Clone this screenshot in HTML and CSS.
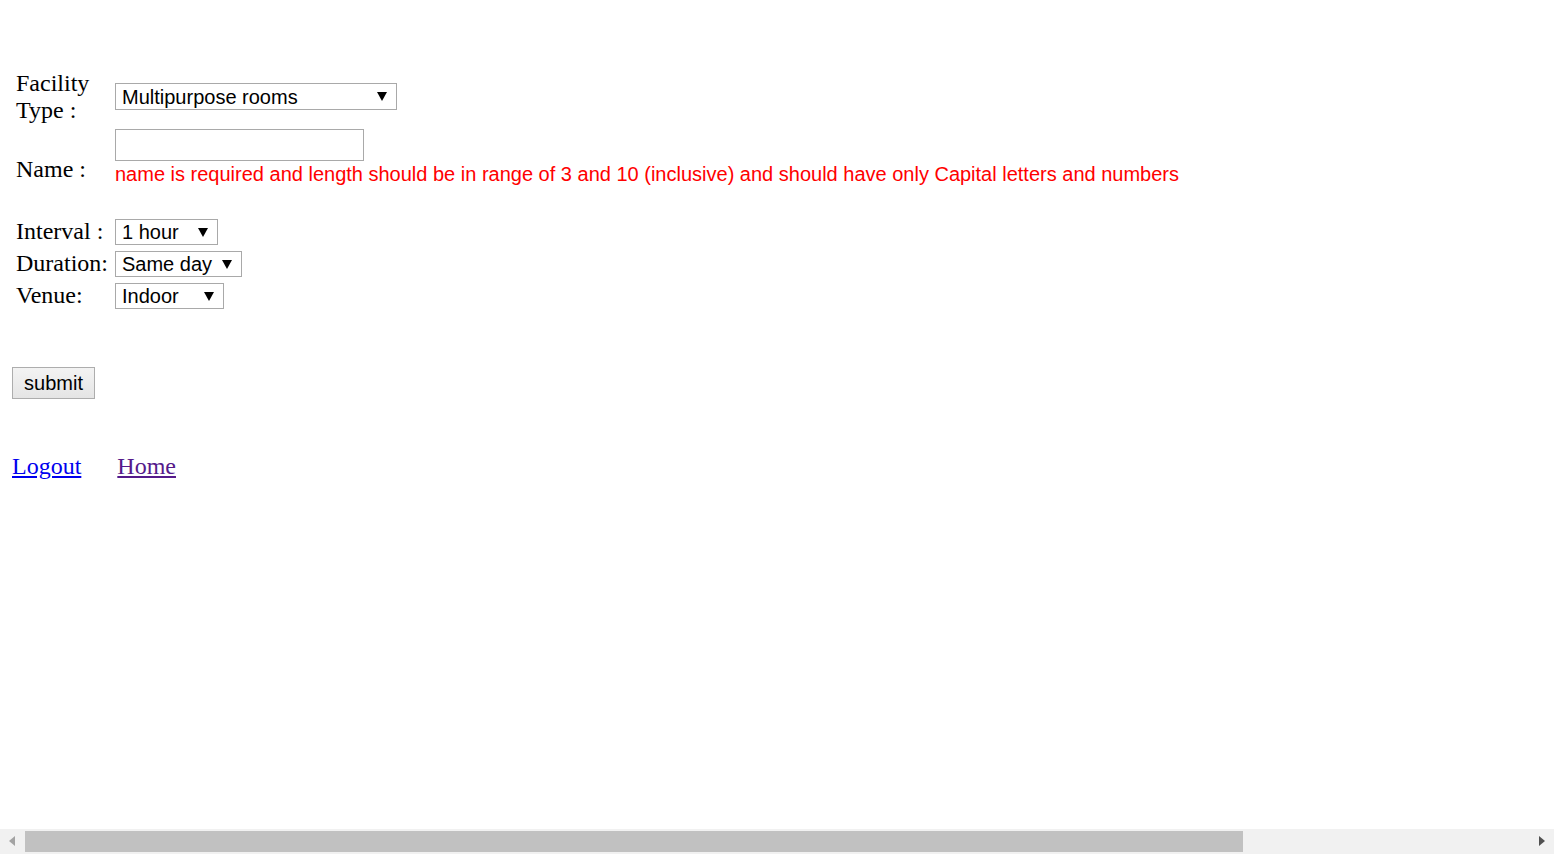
FILE: index.html
```html
<!DOCTYPE html>
<html lang="en">
<head>
<meta charset="utf-8">
<title>Facility</title>
<link rel="stylesheet" href="styles.css">
</head>
<body>
<form class="form" action="#">
  <div class="fields">
    <div class="row row-facility">
      <label class="lbl" for="ftype">Facility Type :</label>
      <span class="sel sel-facility">
        <select id="ftype">
          <option>Multipurpose rooms</option>
          <option>Conference rooms</option>
        </select>
      </span>
    </div>
    <div class="row row-name">
      <label class="lbl lbl-name" for="fname">Name :</label>
      <div class="ctl">
        <input class="txt" id="fname" type="text">
        <div class="error">name is required and length should be in range of 3 and 10 (inclusive) and should have only Capital letters and numbers</div>
      </div>
    </div>
    <div class="row">
      <label class="lbl" for="finterval">Interval :</label>
      <span class="sel sel-interval">
        <select id="finterval">
          <option>1 hour</option>
          <option>2 hours</option>
        </select>
      </span>
    </div>
    <div class="row">
      <label class="lbl" for="fduration">Duration:</label>
      <span class="sel sel-duration">
        <select id="fduration">
          <option>Same day</option>
          <option>Multiple days</option>
        </select>
      </span>
    </div>
    <div class="row">
      <label class="lbl" for="fvenue">Venue:</label>
      <span class="sel sel-venue">
        <select id="fvenue">
          <option>Indoor</option>
          <option>Outdoor</option>
        </select>
      </span>
    </div>
  </div>
  <button class="submit" type="button">submit</button>
</form>
<nav class="links">
  <a class="link" href="#">Logout</a>
  <a class="link link-visited" href="#">Home</a>
</nav>
<div class="hscroll" aria-hidden="true">
  <span class="arrow arrow-left"></span>
  <span class="thumb"></span>
  <span class="arrow arrow-right"></span>
</div>
</body>
</html>
```
FILE: styles.css
```css
html, body {
  background: #ffffff;
}
body {
  margin: 12px;
  font-family: "Liberation Serif", "Times New Roman", serif;
  font-size: 24px;
  line-height: 27px;
  color: #000000;
}
.form {
  margin: 0;
}
.fields {
  display: flex;
  flex-direction: column;
  gap: 5px;
  padding: 58px 0 0 4px;
}
.row {
  display: flex;
  align-items: center;
}
.lbl {
  width: 99px;
  flex-shrink: 0;
  line-height: 27px;
}
.lbl-name {
  margin-bottom: 4px;
}
.row-name {
  height: 84px;
}
.ctl {
  align-self: flex-start;
}
.txt {
  display: block;
  box-sizing: border-box;
  width: 249px;
  height: 32px;
  margin: 0;
  border: 1px solid #a9a9a9;
  padding: 0 4px;
  font-family: "Liberation Sans", Arial, sans-serif;
  font-size: 20px;
  background: #ffffff;
}
.error {
  margin-top: 2px;
  font-family: "Liberation Sans", Arial, sans-serif;
  font-size: 20px;
  line-height: 23px;
  color: #ff0000;
  white-space: nowrap;
}
.sel {
  position: relative;
  display: inline-block;
  height: 26px;
}
.sel select {
  -webkit-appearance: none;
  appearance: none;
  box-sizing: border-box;
  display: block;
  height: 26px;
  margin: 0;
  padding: 1px 0 0 6px;
  border: 1px solid #a9a9a9;
  border-radius: 0;
  background: #ffffff;
  color: #000000;
  font-family: "Liberation Sans", Arial, sans-serif;
  font-size: 20px;
  line-height: 23px;
  outline: none;
}
.sel::after {
  content: "";
  position: absolute;
  right: 10px;
  top: 9px;
  width: 0;
  height: 0;
  border-left: 5px solid transparent;
  border-right: 5px solid transparent;
  border-top: 9px solid #000000;
  pointer-events: none;
}
.sel-facility {
  margin-bottom: 1px;
}
.sel-facility,
.sel-facility select {
  height: 27px;
}
.sel-facility select {
  width: 282px;
}
.sel-interval select {
  width: 103px;
}
.sel-duration select {
  width: 127px;
}
.sel-venue select {
  width: 109px;
}
.submit {
  display: block;
  box-sizing: border-box;
  width: 83px;
  height: 32px;
  margin: 58px 0 0 0;
  padding: 0;
  border: 1px solid #adadad;
  border-radius: 0;
  background: linear-gradient(#f3f3f3, #e5e5e5);
  font-family: "Liberation Sans", Arial, sans-serif;
  font-size: 20px;
  line-height: 28px;
  color: #000000;
}
.links {
  display: flex;
  gap: 36px;
  margin-top: 54px;
  line-height: 27px;
}
.link {
  color: #0000ee;
  text-decoration: underline;
}
.link-visited {
  color: #551a8b;
}
.hscroll {
  position: fixed;
  left: 0;
  right: 0;
  bottom: 0;
  height: 25px;
  background: #f1f1f1;
}
.thumb {
  position: absolute;
  left: 25px;
  top: 2px;
  width: 1218px;
  height: 21px;
  background: #c1c1c1;
}
.arrow {
  position: absolute;
  top: 7px;
  width: 0;
  height: 0;
  border-top: 5px solid transparent;
  border-bottom: 5px solid transparent;
}
.arrow-left {
  left: 9px;
  border-right: 6px solid #a3a3a3;
}
.arrow-right {
  right: 9px;
  border-left: 6px solid #505050;
}
```
